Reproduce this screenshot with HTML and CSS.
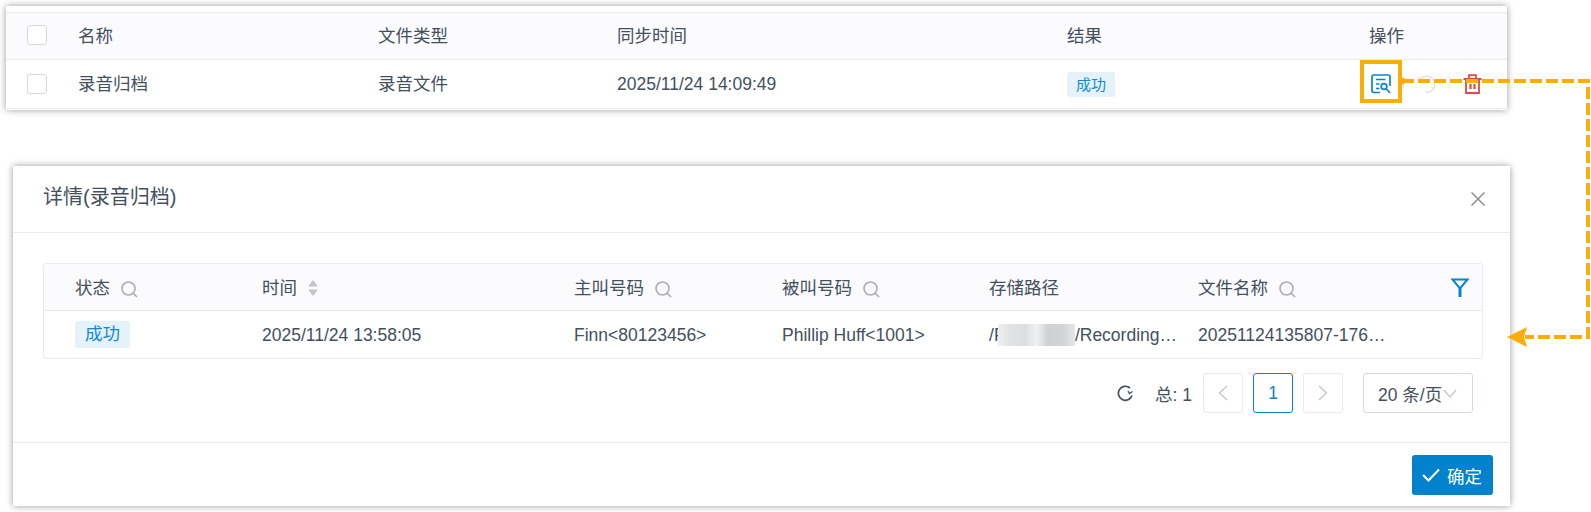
FILE: index.html
```html
<!DOCTYPE html>
<html lang="zh">
<head>
    <meta charset="UTF-8">
    <title>录音归档</title>
    <link rel="stylesheet" href="styles.css">
</head>
<body>
    <section class="panel">
        <div class="sync-row sync-head">
            <span class="checkbox"></span>
            <span>名称</span>
            <span>文件类型</span>
            <span>同步时间</span>
            <span>结果</span>
            <span>操作</span>
        </div>
        <div class="sync-row">
            <span class="checkbox"></span>
            <span>录音归档</span>
            <span>录音文件</span>
            <span>2025/11/24 14:09:49</span>
            <span><span class="tag tag-small">成功</span></span>
            <span class="actions">
                <svg class="icon-view" width="20" height="20" viewBox="0 0 20 20" fill="none" stroke="#0a84cc" stroke-width="1.7">
                    <path d="M9 18.5H2.8A1.8 1.8 0 0 1 1 16.7V2.8A1.8 1.8 0 0 1 2.8 1H17.2A1.8 1.8 0 0 1 19 2.8V12"/>
                    <path d="M5 5.5H14.5M5 10H8.5M5 14.5H8.5"/>
                    <circle cx="13" cy="12.5" r="2.8"/>
                    <path d="M15 14.5L19 19"/>
                </svg>
                <span class="action-sep"></span>
                <svg class="icon-retry" width="18" height="18" viewBox="0 0 18 18" fill="none" stroke="#e4e4e8" stroke-width="1.6">
                    <path d="M3 5A8 8 0 1 1 8 17"/>
                    <path d="M2.5 1V5.5H7"/>
                </svg>
                <span class="action-sep"></span>
                <svg class="icon-trash" width="19" height="20" viewBox="0 0 19 20" fill="none" stroke="#e0484d" stroke-width="1.8">
                    <path d="M0.5 5H18.5M6 5V1.2H13V5"/>
                    <path d="M3 5V19H16V5"/>
                    <path d="M7.5 10V15M11.5 10V15" stroke-width="2.2"/>
                </svg>
            </span>
        </div>
    </section>

    <section class="dialog">
        <header class="dialog-head">
            <h2>详情(录音归档)</h2>
            <svg width="14" height="14" viewBox="0 0 14 14" stroke="#8c8c8c" stroke-width="1.5"><path d="M0.5 0.5L13.5 13.5M13.5 0.5L0.5 13.5"/></svg>
        </header>
        <div class="dialog-body">
            <div class="log-table">
                <div class="log-row log-head">
                    <span class="col-title">状态 <svg class="search" width="17" height="17" viewBox="0 0 17 17" fill="none"><circle cx="7.5" cy="7.5" r="6.5"/><path d="M12.2 12.2L16 16"/></svg></span>
                    <span class="col-title">时间 <svg width="10" height="16" viewBox="0 0 10 16" fill="#c4c4c8"><path d="M5 0L10 6.5H0zM5 16L0 9.5H10z"/></svg></span>
                    <span class="col-title">主叫号码 <svg class="search" width="17" height="17" viewBox="0 0 17 17" fill="none"><circle cx="7.5" cy="7.5" r="6.5"/><path d="M12.2 12.2L16 16"/></svg></span>
                    <span class="col-title">被叫号码 <svg class="search" width="17" height="17" viewBox="0 0 17 17" fill="none"><circle cx="7.5" cy="7.5" r="6.5"/><path d="M12.2 12.2L16 16"/></svg></span>
                    <span class="col-title">存储路径</span>
                    <span class="col-title col-last">
                        <span class="col-title">文件名称 <svg class="search" width="17" height="17" viewBox="0 0 17 17" fill="none"><circle cx="7.5" cy="7.5" r="6.5"/><path d="M12.2 12.2L16 16"/></svg></span>
                        <svg width="18" height="20" viewBox="0 0 18 20" fill="none" stroke="#0a84cc" stroke-width="2"><path d="M1.5 1.5H16.5L9 10.5z"/><path d="M9 10V19" stroke-width="3"/></svg>
                    </span>
                </div>
                <div class="log-row">
                    <span><span class="tag">成功</span></span>
                    <span>2025/11/24 13:58:05</span>
                    <span>Finn&lt;80123456&gt;</span>
                    <span>Phillip Huff&lt;1001&gt;</span>
                    <span class="cut">/<span class="clip-letter">F</span><span class="blurred"></span>/Recordings/archive</span>
                    <span class="cut">20251124135807-1763964</span>
                </div>
            </div>
            <div class="pager">
                <svg class="refresh" width="17" height="17" viewBox="0 0 17 17" fill="none" stroke="#444f5e" stroke-width="1.7">
                    <path d="M15 10.5A7 7 0 1 1 13 3"/>
                    <path d="M15.5 6.5L12.5 8.5L11 6" stroke-width="1.3"/>
                </svg>
                <span class="total">总: 1</span>
                <span class="page-btn"><svg width="10" height="16" viewBox="0 0 10 16" fill="none" stroke="#c6c6ca" stroke-width="1.4"><path d="M9 1L1.5 8L9 15"/></svg></span>
                <span class="page-btn page-current">1</span>
                <span class="page-btn"><svg width="10" height="16" viewBox="0 0 10 16" fill="none" stroke="#c6c6ca" stroke-width="1.4"><path d="M1 1L8.5 8L1 15"/></svg></span>
                <span class="page-size">20 条/页<svg width="14" height="9" viewBox="0 0 14 9" fill="none" stroke="#c6c6ca" stroke-width="1.3"><path d="M1 1L7 8L13 1"/></svg></span>
            </div>
        </div>
        <footer class="dialog-foot">
            <button type="button"><svg width="18" height="14" viewBox="0 0 18 14" fill="none" stroke="#fff" stroke-width="2"><path d="M1 7L6.5 12.5L17 1.5"/></svg>确定</button>
        </footer>
    </section>

    <!-- annotation drawn over the screenshot -->
    <svg class="annotation" width="1591" height="512" viewBox="0 0 1591 512" fill="none" stroke="#fbad0a">
        <rect x="1362" y="62" width="38" height="39" stroke-width="4"/>
        <circle cx="1402" cy="81" r="3.5" fill="#fbad0a" stroke="none"/>
        <path d="M1402 81H1588V337H1525" stroke-width="4" stroke-dasharray="12 4"/>
        <path d="M1507 337L1527 327L1524 337L1527 347z" fill="#fbad0a" stroke="none"/>
    </svg>
</body>
</html>
```
FILE: styles.css
```css
body { margin: 0; position: relative; height: 512px; overflow: hidden; background: #fff; color: #444f5e; font-family: "Liberation Sans", "Noto Sans CJK SC", sans-serif; font-size: 17.5px; }

.panel { margin: 6px 0 0 6px; width: 1501px; height: 104px; padding-top: 6px; box-sizing: border-box; background: #fff; box-shadow: 0 0 7px rgba(0,0,0,.4); }
.sync-row { display: grid; grid-template-columns: 72px 300px 239px 450px 302px 1fr; align-items: center; height: 47px; border-top: 1px solid #e8e9f1; box-sizing: border-box; line-height: 24px; }
.sync-head { background: #fbfbfd; }
.sync-head .checkbox { margin-top: -2px; }
.sync-row + .sync-row { height: 50px; border-bottom: 1px solid #e8e9f1; }
.checkbox { width: 18px; height: 18px; margin-left: 21px; border: 1px solid #d5d6e3; border-radius: 3px; background: #fff; }
.actions { display: flex; align-items: center; margin-left: 2px; }
.action-sep { width: 1px; height: 14px; margin: 0 13px 0 12px; background: #e8e9f1; }
.icon-retry + .action-sep { margin-left: 14px; }
.icon-trash { margin-top: -1px; }

.tag { display: inline-block; height: 27px; line-height: 27px; padding: 0 10px; border-radius: 3px; background: #e5f2fa; color: #0f8bd6; }
.tag-small { height: 25px; line-height: 25px; padding: 0 9px; font-size: 15px; }

.dialog { margin: 56px 0 0 13px; width: 1497px; height: 340px; background: #fff; box-shadow: 0 0 7px rgba(0,0,0,.4); }
.dialog-head { display: flex; align-items: center; justify-content: space-between; height: 66px; padding: 0 25px 0 30px; border-bottom: 1px solid #e8e9f1; }
.dialog-head h2 { margin: -7px 0 0; font-size: 20px; font-weight: normal; }
.dialog-body { height: 210px; box-sizing: border-box; padding: 30px 27px 0 30px; border-bottom: 1px solid #e8e9f1; }

.log-table { border: 1px solid #e8e9f1; border-radius: 3px; }
.log-row { display: grid; grid-template-columns: 187px 312px 208px 207px 209px 1fr; align-items: center; height: 47px; padding-left: 31px; line-height: 24px; }
.log-row span { white-space: nowrap; }
.log-head { background: #fbfbfd; border-bottom: 1px solid #e8e9f1; height: 46px; }
.log-head > span { margin-top: 2px; }
.col-title { display: flex; align-items: center; gap: 11px; }
.col-last { justify-content: space-between; padding-right: 13px; }
.search { stroke: #a9abc0; stroke-width: 1.6; margin-top: 2px; }
.cut { overflow: hidden; text-overflow: ellipsis; width: 190px; }
.clip-letter { display: inline-block; width: 4px; overflow: hidden; vertical-align: bottom; }
.blurred { display: inline-block; width: 77px; height: 22px; vertical-align: -5px; background: linear-gradient(90deg, #eeeeef 0, #e2e3e5 15%, #dddee0 35%, #f0f1f2 50%, #cfd0d3 65%, #d3d4d7 85%, #e6e7e9 100%); }

.pager { display: flex; align-items: center; justify-content: flex-end; margin-top: 14px; padding-right: 10px; }
.refresh { margin-right: 21px; }
.total { margin-right: 11px; }
.page-btn { display: flex; align-items: center; justify-content: center; width: 38px; height: 38px; margin-right: 10px; border: 1px solid #e8e9f1; border-radius: 3px; }
.page-current { border-color: #0a84cc; color: #0a84cc; }
.page-size { display: flex; align-items: center; gap: 1px; width: 110px; height: 40px; margin-left: 10px; padding-left: 14px; box-sizing: border-box; border: 1px solid #d5d6e3; border-radius: 3px; }

.dialog-foot { display: flex; justify-content: flex-end; padding: 12px 17px 0 0; }
.dialog-foot button { display: flex; align-items: center; gap: 7px; width: 81px; height: 40px; padding: 0 0 0 10px; border: none; border-radius: 3px; background: #0082cd; color: #fff; font: inherit; }

.annotation { position: absolute; left: 0; top: 0; }
```
